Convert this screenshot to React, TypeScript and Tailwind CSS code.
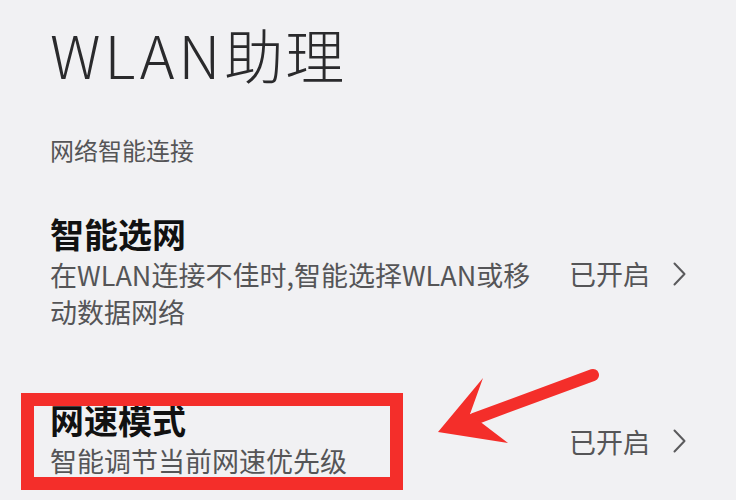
import React from "react";

const font = { fontFamily: '"Noto Sans CJK SC", "Noto Sans", sans-serif' };

function Chevron() {
  return (
    <svg width="13" height="24" viewBox="0 0 13 24" className="shrink-0">
      <path d="M1.5 1.5 L11.5 12 L1.5 22.5" fill="none" stroke="#5a5a5c" strokeWidth="2" strokeLinecap="round" strokeLinejoin="round" />
    </svg>
  );
}

function Row({ title, desc, className }: { title: string; desc: React.ReactNode; className?: string }) {
  return (
    <div className={"flex items-center pr-[50px] " + (className ?? "")}>
      <div className="flex-1 min-w-0">
        <div className="text-[34px] leading-[34px] font-bold text-[#111111]">{title}</div>
        <div className="mt-[5px] text-[27px] leading-[37px] text-[#555557]">{desc}</div>
      </div>
      <div className="flex items-center gap-[23px]">
        <span className="text-[27px] leading-[27px] text-[#555557]">已开启</span>
        <Chevron />
      </div>
    </div>
  );
}

export default function App() {
  return (
    <div className="relative w-[736px] h-[500px] overflow-hidden bg-[#f1f1f3] pl-[50px]" style={font}>
      <div className="pt-[24px] text-[59px] leading-[59px] font-light tracking-[2px] text-[#2a2a2c]">
        <span className="tracking-[4px]">WLAN</span>助理
      </div>
      <div className="mt-[55px] text-[24px] leading-[24px] text-[#555557]">网络智能连接</div>
      <Row
        className="mt-[55px]"
        title="智能选网"
        desc={
          <>
            在WLAN连接不佳时,智能选择WLAN或移
            <br />
            动数据网络
          </>
        }
      />
      <Row className="mt-[73px]" title="网速模式" desc="智能调节当前网速优先级" />

      <div className="absolute left-[21px] top-[393px] w-[382px] h-[97px] border-[13px] border-[#f42e2a]" />
      <svg className="absolute left-0 top-0" width="736" height="500" viewBox="0 0 736 500">
        <line x1="474" y1="419" x2="593" y2="375" stroke="#f42e2a" strokeWidth="12" strokeLinecap="round" />
        <polygon points="438,432 483,378 470,414 508,443" fill="#f42e2a" />
      </svg>
    </div>
  );
}
